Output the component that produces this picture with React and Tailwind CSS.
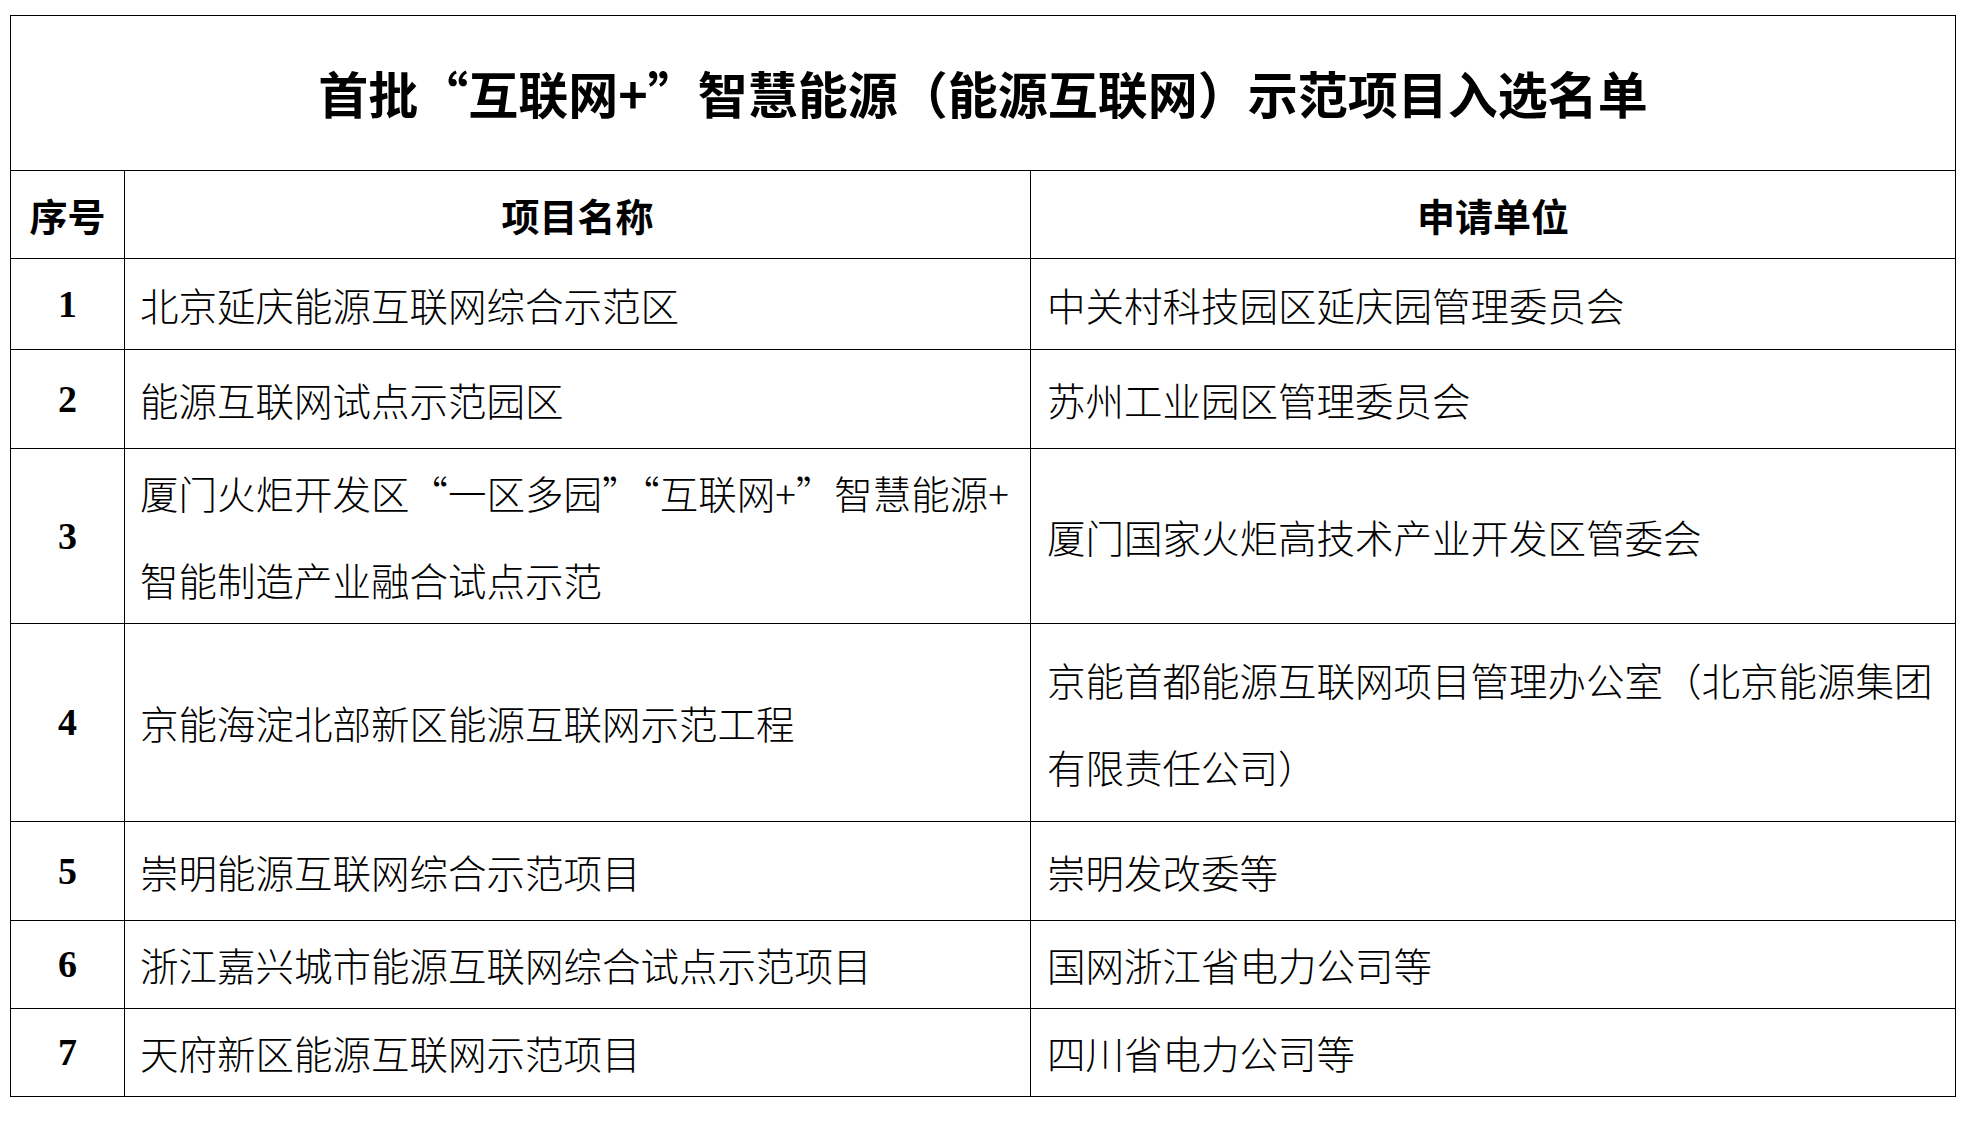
import React from "react";

const rows = [
  { no: "1", name: ["北京延庆能源互联网综合示范区"], unit: ["中关村科技园区延庆园管理委员会"], h: "h-[91px]" },
  { no: "2", name: ["能源互联网试点示范园区"], unit: ["苏州工业园区管理委员会"], h: "h-[99px]" },
  {
    no: "3",
    name: ["厦门火炬开发区“一区多园”“互联网+”智慧能源+", "智能制造产业融合试点示范"],
    unit: ["厦门国家火炬高技术产业开发区管委会"],
    h: "h-[175px]",
  },
  {
    no: "4",
    name: ["京能海淀北部新区能源互联网示范工程"],
    unit: ["京能首都能源互联网项目管理办公室（北京能源集团", "有限责任公司）"],
    h: "h-[198px]",
  },
  { no: "5", name: ["崇明能源互联网综合示范项目"], unit: ["崇明发改委等"], h: "h-[99px]" },
  { no: "6", name: ["浙江嘉兴城市能源互联网综合试点示范项目"], unit: ["国网浙江省电力公司等"], h: "h-[87px]" },
  { no: "7", name: ["天府新区能源互联网示范项目"], unit: ["四川省电力公司等"], h: "h-[88px]" },
];

const cjkBody = "font-['Noto_Sans_CJK_SC',sans-serif] font-light text-[38.5px] leading-[87px] whitespace-nowrap";
const cjkBold = "font-['Noto_Sans_CJK_SC',sans-serif] font-bold";

function Lines({ lines }) {
  return lines.map((l, i) => (
    <div key={i} className={cjkBody}>
      {l}
    </div>
  ));
}

export default function App() {
  return (
    <div className="min-h-screen bg-white pl-[10px] pt-[15px] text-black">
      <table className="w-[1945px] table-fixed border-collapse border border-black">
        <colgroup>
          <col className="w-[114px]" />
          <col className="w-[906px]" />
          <col className="w-[925px]" />
        </colgroup>
        <tbody>
          <tr>
            <td colSpan={3} className="h-[155px] border border-black text-center align-middle">
              <span className={`${cjkBold} text-[50px] leading-none`}>
                首批“互联网+”智慧能源（能源互联网）示范项目入选名单
              </span>
            </td>
          </tr>
          <tr>
            <td className={`h-[88px] border border-black text-center align-middle ${cjkBold} text-[38px]`}>序号</td>
            <td className={`border border-black text-center align-middle ${cjkBold} text-[38px]`}>项目名称</td>
            <td className={`border border-black text-center align-middle ${cjkBold} text-[38px]`}>申请单位</td>
          </tr>
          {rows.map((r) => (
            <tr key={r.no}>
              <td
                className={`${r.h} border border-black text-center align-middle font-['Liberation_Serif',serif] text-[38px] font-bold`}
              >
                {r.no}
              </td>
              <td className="border border-black pl-[15px] align-middle">
                <Lines lines={r.name} />
              </td>
              <td className="border border-black pl-[16px] align-middle">
                <Lines lines={r.unit} />
              </td>
            </tr>
          ))}
        </tbody>
      </table>
    </div>
  );
}
